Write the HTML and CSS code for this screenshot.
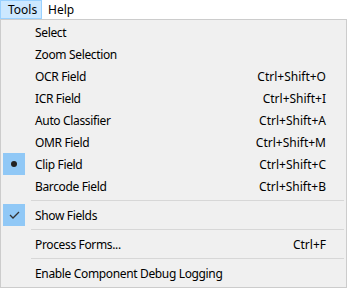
FILE: index.html
```html
<!DOCTYPE html>
<html lang="en">
<head>
  <meta charset="UTF-8">
  <title>Tools menu</title>
  <link rel="stylesheet" href="styles.css">
</head>
<body>
  <div class="menubar">
    <div class="top open">Tools</div>
    <div class="top help">Help</div>
  </div>
  <div class="menu">
    <div class="item"><span class="mark"></span><span class="label">Select</span></div>
    <div class="item"><span class="mark"></span><span class="label">Zoom Selection</span></div>
    <div class="item"><span class="mark"></span><span class="label">OCR Field</span><span class="key">Ctrl+Shift+O</span></div>
    <div class="item"><span class="mark"></span><span class="label">ICR Field</span><span class="key">Ctrl+Shift+I</span></div>
    <div class="item"><span class="mark"></span><span class="label">Auto Classifier</span><span class="key">Ctrl+Shift+A</span></div>
    <div class="item"><span class="mark"></span><span class="label">OMR Field</span><span class="key">Ctrl+Shift+M</span></div>
    <div class="item"><span class="mark on"><span class="dot"></span></span><span class="label">Clip Field</span><span class="key">Ctrl+Shift+C</span></div>
    <div class="item"><span class="mark"></span><span class="label">Barcode Field</span><span class="key">Ctrl+Shift+B</span></div>
    <div class="sep"></div>
    <div class="item">
      <span class="mark on">
        <svg width="22" height="22" viewBox="0 0 22 22"><polyline points="7,11 10,14 16,8" fill="none" stroke="#333" stroke-width="1.3"/></svg>
      </span>
      <span class="label">Show Fields</span>
    </div>
    <div class="sep"></div>
    <div class="item"><span class="mark"></span><span class="label">Process Forms...</span><span class="key">Ctrl+F</span></div>
    <div class="sep"></div>
    <div class="item"><span class="mark"></span><span class="label">Enable Component Debug Logging</span></div>
  </div>
</body>
</html>
```

FILE: styles.css
```css
body {
  margin: 0;
  background: #ffffff;
  font-family: "Noto Sans", "Liberation Sans", sans-serif;
  font-size: 12px;
  color: #000;
}
.menubar {
  display: flex;
  height: 19px;
  background: #fff;
}
.top {
  box-sizing: border-box;
  height: 19px;
  line-height: 17px;
  padding: 0 6px 0 7px;
  border: 1px solid transparent;
}
.open {
  width: 42px;
  background: #cce8ff;
  border-color: #99d1ff;
}
.help {
  padding-left: 5px;
}
.menu {
  box-sizing: border-box;
  width: 347px;
  height: 269px;
  background: #f0f0f0;
  border: 1px solid #cccccc;
  padding: 1px 0 3px 0;
}
.item {
  display: flex;
  align-items: center;
  height: 22px;
}
.mark {
  width: 22px;
  height: 22px;
  margin-left: 2px;
  display: flex;
  align-items: center;
  justify-content: center;
}
.mark.on {
  background: #90c8f6;
}
.dot {
  width: 6px;
  height: 6px;
  border-radius: 50%;
  background: #222;
}
.label {
  flex: 1;
  margin-left: 10px;
  letter-spacing: -0.35px;
}
.key {
  margin-right: 20px;
}
.sep {
  height: 1px;
  background: #d7d7d7;
  margin: 3px 2px 3px 30px;
}
```
